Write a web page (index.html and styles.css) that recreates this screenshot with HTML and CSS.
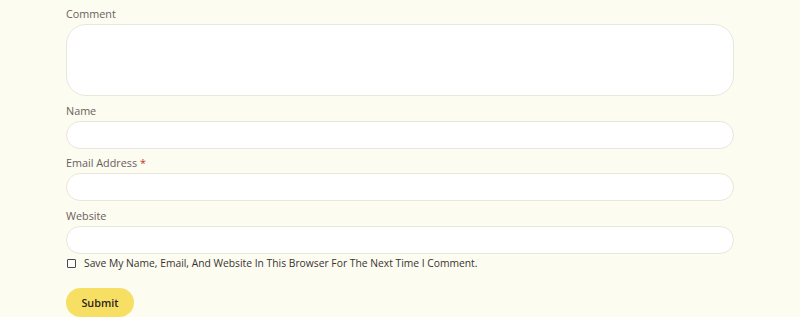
FILE: index.html
```html
<!DOCTYPE html>
<html>
<head>
<meta charset="utf-8">
<link rel="stylesheet" href="styles.css">
</head>
<body>
<div class="page">
  <form class="comment-form">
    <div class="field">
      <label class="label">Comment</label>
      <textarea class="input textarea"></textarea>
    </div>
    <div class="field">
      <label class="label">Name</label>
      <input class="input" type="text">
    </div>
    <div class="field">
      <label class="label">Email Address <span class="req">*</span></label>
      <input class="input" type="text">
    </div>
    <div class="field">
      <label class="label">Website</label>
      <input class="input" type="text">
    </div>
    <div class="consent">
      <span class="box"></span>
      <span class="consent-text">save my name, email, and website in this browser for the next time I comment.</span>
    </div>
    <button class="submit" type="button">Submit</button>
  </form>
</div>
</body>
</html>
```
FILE: styles.css
```css
html, body {
  margin: 0;
  padding: 0;
  background: #ffffff;
}
.page {
  background: #fcfcf1;
  height: 317px;
  font-family: "Open Sans", "Liberation Sans", sans-serif;
}
.comment-form {
  width: 668px;
  margin-left: 66px;
  padding-top: 6px;
  display: flex;
  flex-direction: column;
}
.field {
  display: flex;
  flex-direction: column;
  margin-bottom: 6.6px;
}
.label {
  font-size: 10.8px;
  line-height: 16px;
  height: 16px;
  color: #6b605b;
  margin-bottom: 2px;
}
.req {
  color: #c0392b;
}
.input {
  box-sizing: border-box;
  height: 28px;
  width: 668px;
  border: 1px solid #e9e6dc;
  background: #ffffff;
  border-radius: 14px;
  margin: 0;
  padding: 0 14px;
  outline: none;
}
.textarea {
  height: 72px;
  border-radius: 20px;
  resize: none;
  display: block;
}
.consent {
  display: flex;
  align-items: center;
  height: 14px;
  margin-top: -4px;
}
.box {
  box-sizing: border-box;
  width: 9px;
  height: 9px;
  border: 1px solid #4a4560;
  border-radius: 1px;
  margin-left: 1px;
  margin-right: 8px;
}
.consent-text {
  font-size: 10.3px;
  color: #3a3333;
  text-transform: capitalize;
}
.submit {
  margin-top: 18px;
  width: 68px;
  height: 29px;
  border: none;
  border-radius: 15px;
  background: #f7df63;
  color: #2a2420;
  font-family: "Open Sans", "Liberation Sans", sans-serif;
  font-size: 10.8px;
  font-weight: 600;
  padding: 0;
}
```
